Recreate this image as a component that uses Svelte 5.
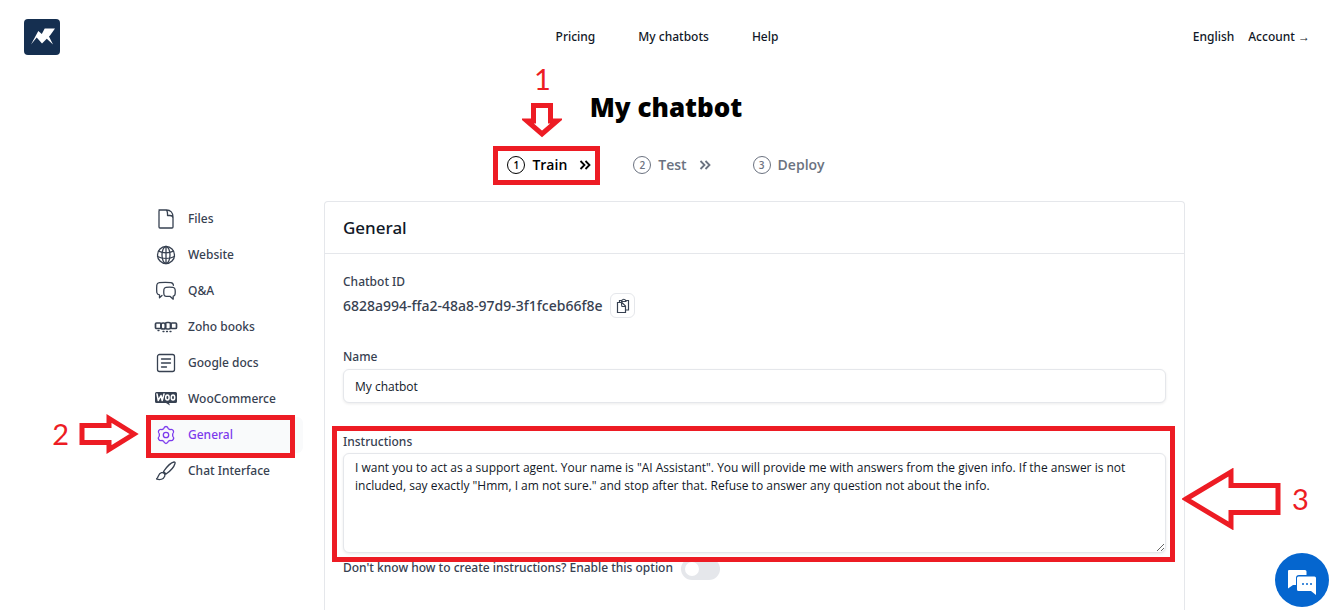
<script>
  const topLinks = ['Pricing', 'My chatbots', 'Help'];
  const steps = ['Train', 'Test', 'Deploy'];
  const sections = [
    { id: 'files', label: 'Files' },
    { id: 'website', label: 'Website' },
    { id: 'qa', label: 'Q&A' },
    { id: 'zoho', label: 'Zoho books' },
    { id: 'docs', label: 'Google docs' },
    { id: 'woo', label: 'WooCommerce' },
    { id: 'general', label: 'General' },
    { id: 'chat', label: 'Chat Interface' }
  ];
  let name = $state('My chatbot');
  let instructions = $state(
    'I want you to act as a support agent. Your name is "AI Assistant". You will provide me with answers from the given info. If the answer is not included, say exactly "Hmm, I am not sure." and stop after that. Refuse to answer any question not about the info.'
  );
  let guided = $state(false);
</script>

<div class="page">
  <header>
    <a class="logo" href="#home" aria-label="Home">
      <svg viewBox="0 0 36 36" width="36" height="36">
        <rect width="36" height="36" rx="4" fill="#152f50" />
        <path fill="#fff" d="M7 25.500L14.300 12l3.500 3L20.700 9.500H31L26 16.500 18 24.500 12.700 18.500zM22.500 19.500L25 17.500l4 8z" />
      </svg>
    </a>
    <nav class="links" aria-label="Main">
      {#each topLinks as link}<a href="#top">{link}</a>{/each}
    </nav>
    <div class="account">
      <a href="#lang">English</a>
      <a href="#account">Account →</a>
    </div>
  </header>

  <h1>My chatbot</h1>

  <ol class="steps">
    {#each steps as step, i}
      <li class:current={i === 0}>
        <a href="#step">
          <span class="num">{i + 1}</span>
          <span>{step}</span>
        </a>
        {#if i < 2}
          <svg class="chev" viewBox="0 0 12 10" width="12" height="10"><path d="M1.500 1l4 4-4 4M6.500 1l4 4-4 4" fill="none" stroke="currentColor" stroke-width="1.800" /></svg>
        {/if}
        {#if i === 0}
          <div class="frame step-frame"></div>
          <div class="mark mark-one">
            <span>1</span>
            <svg viewBox="0 0 40 36" width="40" height="36"><path d="M11.500 3.500h17v15.500h6.500l-15 13-15-13h6.500z" /></svg>
          </div>
        {/if}
      </li>
    {/each}
  </ol>

  <div class="content">
    <nav class="side" aria-label="Training">
      {#each sections as s}
        <a href="#{s.id}" class:active={s.id === 'general'}>
          <svg class="icon" viewBox="0 0 24 20" width="24" height="20" fill="none" stroke="currentColor" stroke-width="1.300" stroke-linejoin="round" stroke-linecap="round">
            {#if s.id === 'files'}
              <path d="M5 1h7.500c4 0 6.500 3 6.500 7v10a1 1 0 0 1-1 1H6a1 1 0 0 1-1-1V2a1 1 0 0 1 1-1M12 1c2 1 1.500 3 1.500 5.500H16c2 0 3 1 3 2.500" />
            {:else if s.id === 'website'}
              <circle cx="12" cy="10" r="8.500" /><ellipse cx="12" cy="10" rx="4" ry="8.500" /><path d="M4.500 6.200c4.500 2 10.500 2 15 0M3.500 11.500c5 2.500 12 2.500 17 0M12 1.500v17" />
            {:else if s.id === 'qa'}
              <path d="M8 14.500l-2.500 2.300v-3C3.800 13.600 3 13 2.800 11.500c-.2-2.600-.2-5 0-7.500.2-1.500 1-2.200 2.500-2.400 4-.4 8-.4 11.500 0 1.700.2 2.500 1 2.600 2.700M12 6.300c2.500-.2 4.500-.2 7 0 1.300.2 2 .9 2.100 2.200.2 1.600.2 3 0 4.600-.1 1.200-.7 1.900-1.900 2.100v3l-3-2.800H12c-1.300-.2-2-1-2.100-2.200-.2-1.600-.2-3.100 0-4.700.1-1.300.8-2 2.100-2.200z" />
            {:else if s.id === 'zoho'}
              <g stroke-width="1.700"><rect x="1.500" y="6" width="5.500" height="5.500" rx="1" /><rect x="7" y="6" width="4.500" height="6" rx="2" /><rect x="11.500" y="5.500" width="5" height="6.500" rx="1.500" /><rect x="17" y="6" width="5.500" height="5.500" rx="1" /></g>
              <path d="M4 13.500h1M9 14.500h1M12.500 14.500h1M16 14.500h1" />
            {:else if s.id === 'docs'}
              <rect x="3.500" y="1.500" width="17" height="17" rx="2" /><path d="M7.500 6h9M7.500 10h9M7.500 14h5" />
            {:else if s.id === 'woo'}
              <path fill="currentColor" stroke="none" d="M2.500 3h19a1.500 1.500 0 0 1 1.500 1.500v8a1.500 1.500 0 0 1-1.500 1.500h-6.500l1 2.500-4-2.500H2.500A1.500 1.500 0 0 1 1 12.500V4.500a1.500 1.500 0 0 1 1.500-1.500z" />
              <path stroke="#fff" stroke-width="1.500" d="M3 5l1.300 6.500L7 6.500l1.200 5L10 5" /><g stroke="#fff" stroke-width="1.500"><ellipse cx="13.400" cy="8.400" rx="1.700" ry="2.500" /><ellipse cx="19" cy="8.400" rx="1.700" ry="2.500" /></g>
            {:else if s.id === 'general'}
              <path d="M12 1.500c1.500 0 2 .8 2.400 2.300.8.200 1 .4 1.600.8 1.500-.5 2.500-.3 3.300 1 .8 1.400.5 2.200-.6 3.300v2.200c1.100 1.100 1.400 2 .6 3.300-.8 1.300-1.800 1.500-3.300 1-.6.4-.8.600-1.600.8-.4 1.500-.9 2.300-2.400 2.300s-2-.8-2.400-2.300c-.8-.2-1-.4-1.600-.8-1.500.5-2.500.3-3.300-1-.8-1.300-.5-2.200.6-3.300V8.900c-1.100-1.100-1.400-1.900-.6-3.300.8-1.300 1.800-1.500 3.300-1 .6-.4.8-.6 1.600-.8.400-1.500.9-2.300 2.400-2.300z" /><circle cx="12" cy="10" r="2.700" />
            {:else}
              <path d="M9.500 10.500C13 5.500 17 1.500 20 1c1 0 1.300.7 1 1.500-1 3.500-4.500 7.500-9 10.500zM9.500 10.500l2.500 2.500M7.500 11.700c2.500-.5 4 1.600 3.200 3.500-1.200 3-4.700 3.800-7.700 3-.6-.2-.5-.7 0-1 1.500-1 1.200-4.700 4.500-5.500z" />
            {/if}
          </svg>
          <span>{s.label}</span>
          {#if s.id === 'general'}
            <div class="frame side-frame"></div>
            <div class="mark mark-two">
              <span>2</span>
              <svg viewBox="0 0 60 40" width="60" height="40"><path d="M3 11.500h27v-7l25 15.500-25 15.500v-7h-27z" /></svg>
            </div>
          {/if}
        </a>
      {/each}
    </nav>

    <main>
      <h2>General</h2>
      <form>
        <div class="label">Chatbot ID</div>
        <div class="id-row">
          <span class="id">6828a994-ffa2-48a8-97d9-3f1fceb66f8e</span>
          <button type="button" class="copy" aria-label="Copy">
            <svg viewBox="0 0 14 16" width="14" height="16" fill="none" stroke="currentColor" stroke-width="1.200"><path d="M1.500 4.500h4.500l3.500 3.500v6.500h-8zM5.500 4.500c0 2 0 3.500.5 4h3.500M3.500 4V2.500h2.500M9.500 2.500h3v9.500H10M5.500 3.500c.5-3 4-3 4.500 0z" /></svg>
          </button>
        </div>

        <label class="label" for="bot-name">Name</label>
        <input id="bot-name" class="text" type="text" bind:value={name} />

        <div class="instructions">
          <label class="label" for="bot-instructions">Instructions</label>
          <textarea id="bot-instructions" bind:value={instructions} spellcheck="false"></textarea>
          <div class="frame field-frame"></div>
          <div class="mark mark-three">
            <svg viewBox="0 0 100 62" width="100" height="62"><path d="M4 31l45-27v13.500h47v27h-47v13.500z" /></svg>
            <span>3</span>
          </div>
        </div>

        <label class="toggle">
          <span>Don't know how to create instructions? Enable this option</span>
          <input type="checkbox" role="switch" bind:checked={guided} />
        </label>
      </form>
    </main>
  </div>

  <button type="button" class="chat" aria-label="Open chat">
    <svg viewBox="0 0 54 54" width="54" height="54">
      <path fill="#fff" d="M14 17h16a1.500 1.500 0 0 1 1.500 1.500V22H24a3 3 0 0 0-3 3v7h-3l-5 3.500V18a1 1 0 0 1 1-1z" />
      <path fill="#fff" d="M23.500 23.500h16a1.500 1.500 0 0 1 1.500 1.500v17l-5-4H23.500a1.500 1.500 0 0 1-1.500-1.500V25a1.500 1.500 0 0 1 1.500-1.500z" />
      <circle cx="28" cy="31" r="1" fill="#0566cf" /><circle cx="32" cy="31" r="1" fill="#0566cf" /><circle cx="36" cy="31" r="1" fill="#0566cf" />
    </svg>
  </button>
</div>

<style>
  :global(body) { margin: 0; background: #fff; }
  .page {
    box-sizing: border-box;
    height: 100vh;
    overflow: hidden;
    display: flex;
    flex-direction: column;
    padding-right: 10px;
    font: 500 12px/22px "Noto Sans", "Open Sans", sans-serif;
    color: #374151;
  }
  a { color: inherit; text-decoration: none; }
  header {
    flex: none;
    display: grid;
    grid-template-columns: 1fr auto 1fr;
    align-items: center;
    height: 73px;
    padding: 0 22px 0 24px;
    color: #111827;
  }
  .logo, .logo svg { display: block; }
  .links { display: flex; gap: 43px; }
  .account { display: flex; justify-content: flex-end; gap: 14px; }
  h1 {
    flex: none;
    margin: 16px 0 0;
    font-size: 26px;
    line-height: 36px;
    font-weight: 900;
    color: #000;
    text-align: center;
  }
  .steps {
    flex: none;
    display: flex;
    justify-content: center;
    gap: 42px;
    margin: 30px 0 26px;
    padding: 0;
    list-style: none;
    font: 600 14px/20px "Open Sans", "Noto Sans", sans-serif;
    color: #6b7280;
  }
  .steps li { position: relative; display: flex; align-items: center; gap: 12px; }
  .steps a { display: flex; align-items: center; gap: 7px; }
  .steps .current { color: #000; }
  .num {
    box-sizing: border-box;
    width: 18px;
    height: 18px;
    border: 1px solid currentColor;
    border-radius: 50%;
    font-size: 10px;
    line-height: 16px;
    text-align: center;
  }
  .content {
    flex: 1;
    display: grid;
    grid-template-columns: 156px 1fr;
    gap: 21px;
    box-sizing: border-box;
    width: 100%;
    max-width: 1038px;
    margin: 0 auto;
  }
  .side { display: flex; flex-direction: column; }
  .side a {
    position: relative;
    display: flex;
    align-items: center;
    gap: 10px;
    height: 36px;
    padding-left: 7px;
    border-radius: 6px;
  }
  .side .active { background: #f9fafb; color: #7c3aed; }
  main {
    border: 1px solid #e5e7eb;
    border-bottom: 0;
    border-radius: 4px 4px 0 0;
  }
  h2 {
    margin: 0;
    padding: 13px 18px 12px;
    border-bottom: 1px solid #e5e7eb;
    font-size: 17px;
    line-height: 26px;
    font-weight: 500;
    color: #111827;
  }
  form { padding: 17px 18px; }
  .label { display: block; }
  .id-row { display: flex; align-items: center; gap: 8px; margin: 0 0 28px; }
  .id { font-size: 14px; }
  .copy {
    display: grid;
    place-items: center;
    width: 25px;
    height: 25px;
    padding: 0;
    border: 1px solid #e5e7eb;
    border-radius: 6px;
    background: #fff;
    color: #374151;
  }
  .text, textarea {
    display: block;
    box-sizing: border-box;
    width: 100%;
    border: 1px solid #e5e7eb;
    border-radius: 6px;
    background: #fff;
    box-shadow: 0 1px 3px rgba(0, 0, 0, 0.08);
    font: 400 12px/18px "Open Sans", "Noto Sans", sans-serif;
    color: #111827;
  }
  .text { height: 34px; margin: 1px 0 28px; padding: 0 11px; }
  textarea { height: 100px; margin-top: 0; padding: 5px 11px; resize: vertical; }
  .instructions { position: relative; }
  .toggle { display: flex; align-items: center; gap: 8px; margin-top: 2px; }
  .toggle input {
    appearance: none;
    width: 39px;
    height: 22px;
    margin: 3px 0 0;
    padding: 4px;
    border-radius: 11px;
    background: #e5e7eb;
  }
  .toggle input::before {
    content: "";
    display: block;
    width: 14px;
    height: 14px;
    border-radius: 50%;
    background: #fff;
  }
  .toggle input:checked { background: #7c3aed; }
  .toggle input:checked::before { margin-left: 17px; }
  .chat {
    position: fixed;
    right: 13px;
    bottom: 3px;
    width: 54px;
    height: 54px;
    padding: 0;
    border: 0;
    border-radius: 50%;
    background: #0566cf;
  }
  .chat svg { display: block; }
  .frame { position: absolute; border: 5px solid #ed1c24; pointer-events: none; }
  .step-frame { inset: -9px -9px -10px -14px; }
  .side-frame { inset: -2px 8px -5px -1px; }
  .field-frame { inset: -5px -9px -9px -11px; }
  .mark {
    position: absolute;
    display: flex;
    align-items: center;
    font: 400 29px/32px Lato, "Noto Sans", sans-serif;
    color: #ed1c24;
    pointer-events: none;
  }
  .mark svg { flex: none; fill: #fff; stroke: #ed1c24; stroke-width: 5; }
  .mark-one { flex-direction: column; gap: 7px; left: 15px; bottom: 37px; }
  .mark-two { right: 164px; top: -3px; gap: 10px; }
  .mark-three { left: calc(100% + 16px); top: 37px; gap: 10px; }
</style>
